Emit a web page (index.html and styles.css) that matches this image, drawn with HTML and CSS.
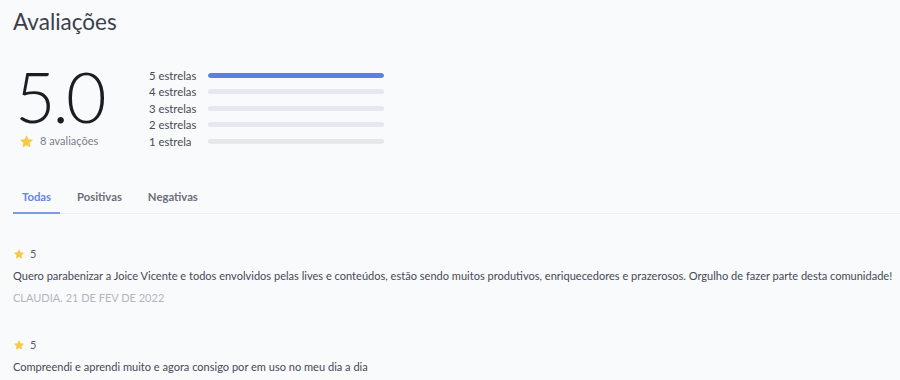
FILE: index.html
```html
<!DOCTYPE html>
<html lang="pt-BR">
<head>
<meta charset="utf-8">
<link rel="stylesheet" href="styles.css">
</head>
<body>
<div class="page">
  <h1 class="title">Avaliações</h1>
  <div class="summary">
    <div class="score">
      <div class="score-num">5.0</div>
      <div class="score-count">
        <svg class="star-big" viewBox="0 0 24 24"><path d="M12 1.8l3.1 6.6 7.2.9-5.3 5 1.4 7.2L12 18l-6.4 3.5L7 14.3l-5.3-5 7.2-.9z"/></svg>
        <span>8 avaliações</span>
      </div>
    </div>
    <div class="bars">
      <div class="bar-row"><span class="bar-label">5 estrelas</span><div class="bar"><div class="bar-fill" style="width:100%"></div></div></div>
      <div class="bar-row"><span class="bar-label">4 estrelas</span><div class="bar"><div class="bar-fill" style="width:0%"></div></div></div>
      <div class="bar-row"><span class="bar-label">3 estrelas</span><div class="bar"><div class="bar-fill" style="width:0%"></div></div></div>
      <div class="bar-row"><span class="bar-label">2 estrelas</span><div class="bar"><div class="bar-fill" style="width:0%"></div></div></div>
      <div class="bar-row"><span class="bar-label">1 estrela</span><div class="bar"><div class="bar-fill" style="width:0%"></div></div></div>
    </div>
  </div>
  <div class="tabs">
    <div class="tab active">Todas</div>
    <div class="tab">Positivas</div>
    <div class="tab">Negativas</div>
  </div>
  <div class="reviews">
    <div class="review">
      <div class="review-rating"><svg class="star-small" viewBox="0 0 24 24"><path d="M12 1.8l3.1 6.6 7.2.9-5.3 5 1.4 7.2L12 18l-6.4 3.5L7 14.3l-5.3-5 7.2-.9z"/></svg><span>5</span></div>
      <p class="review-text">Quero parabenizar a Joice Vicente e todos envolvidos pelas lives e conteúdos, estão sendo muitos produtivos, enriquecedores e prazerosos. Orgulho de fazer parte desta comunidade!</p>
      <div class="review-meta">CLAUDIA. 21 DE FEV DE 2022</div>
    </div>
    <div class="review">
      <div class="review-rating"><svg class="star-small" viewBox="0 0 24 24"><path d="M12 1.8l3.1 6.6 7.2.9-5.3 5 1.4 7.2L12 18l-6.4 3.5L7 14.3l-5.3-5 7.2-.9z"/></svg><span>5</span></div>
      <p class="review-text">Compreendi e aprendi muito e agora consigo por em uso no meu dia a dia</p>
    </div>
  </div>
</div>
</body>
</html>
```

FILE: styles.css
```css
* { box-sizing: border-box; }
html, body { margin: 0; padding: 0; background: #f9fafc; }
body { font-family: "Lato", "Open Sans", sans-serif; color: #3f4350; }
.page { padding: 8px 0 0 13px; }
.title { margin: 0; font-size: 22.5px; font-weight: 400; line-height: 28px; color: #3b3f4c; }
.summary { display: flex; align-items: flex-start; margin-top: 31px; }
.score { width: 136px; display: flex; flex-direction: column; align-items: flex-start; padding-left: 2px; }
.score-num { font-size: 70px; font-weight: 300; line-height: 60px; color: #1c1d21; letter-spacing: -3px; margin-top: -1px; }
.score-count { display: flex; align-items: center; gap: 6px; margin-top: 7px; padding-left: 4px; font-size: 11px; line-height: 16px; color: #7a7e88; }
.star-big { width: 15px; height: 15px; fill: #f6c94a; }
.bars { display: flex; flex-direction: column; }
.bar-row { display: flex; align-items: center; height: 16.5px; }
.bar-label { width: 59px; font-size: 11.3px; color: #464a55; }
.bar { width: 176px; height: 5px; background: #e6e8ee; border-radius: 3px; overflow: hidden; }
.bar-fill { height: 100%; background: #5881e4; border-radius: 3px; }
.tabs { display: flex; margin-top: 33px; border-bottom: 1px solid #eceef2; }
.tab { padding: 7px 9px 9px 9px; margin-right: 8px; font-size: 11.3px; line-height: 13px; font-weight: 700; color: #6b6f79; border-bottom: 2px solid transparent; margin-bottom: -1px; }
.tab.active { color: #6487e2; border-bottom-color: #7c9aea; }
.reviews { display: flex; flex-direction: column; }
.review { padding-top: 33px; }
.review-rating { display: flex; align-items: center; gap: 5px; height: 14px; font-size: 11px; color: #5a5e68; }
.star-small { width: 12px; height: 12px; fill: #f6c94a; }
.review-text { margin: 8px 0 0 0; font-size: 11.05px; color: #454955; line-height: 14px; white-space: nowrap; }
.review-meta { margin-top: 8px; font-size: 11px; line-height: 14px; color: #b3b6bd; }
```
